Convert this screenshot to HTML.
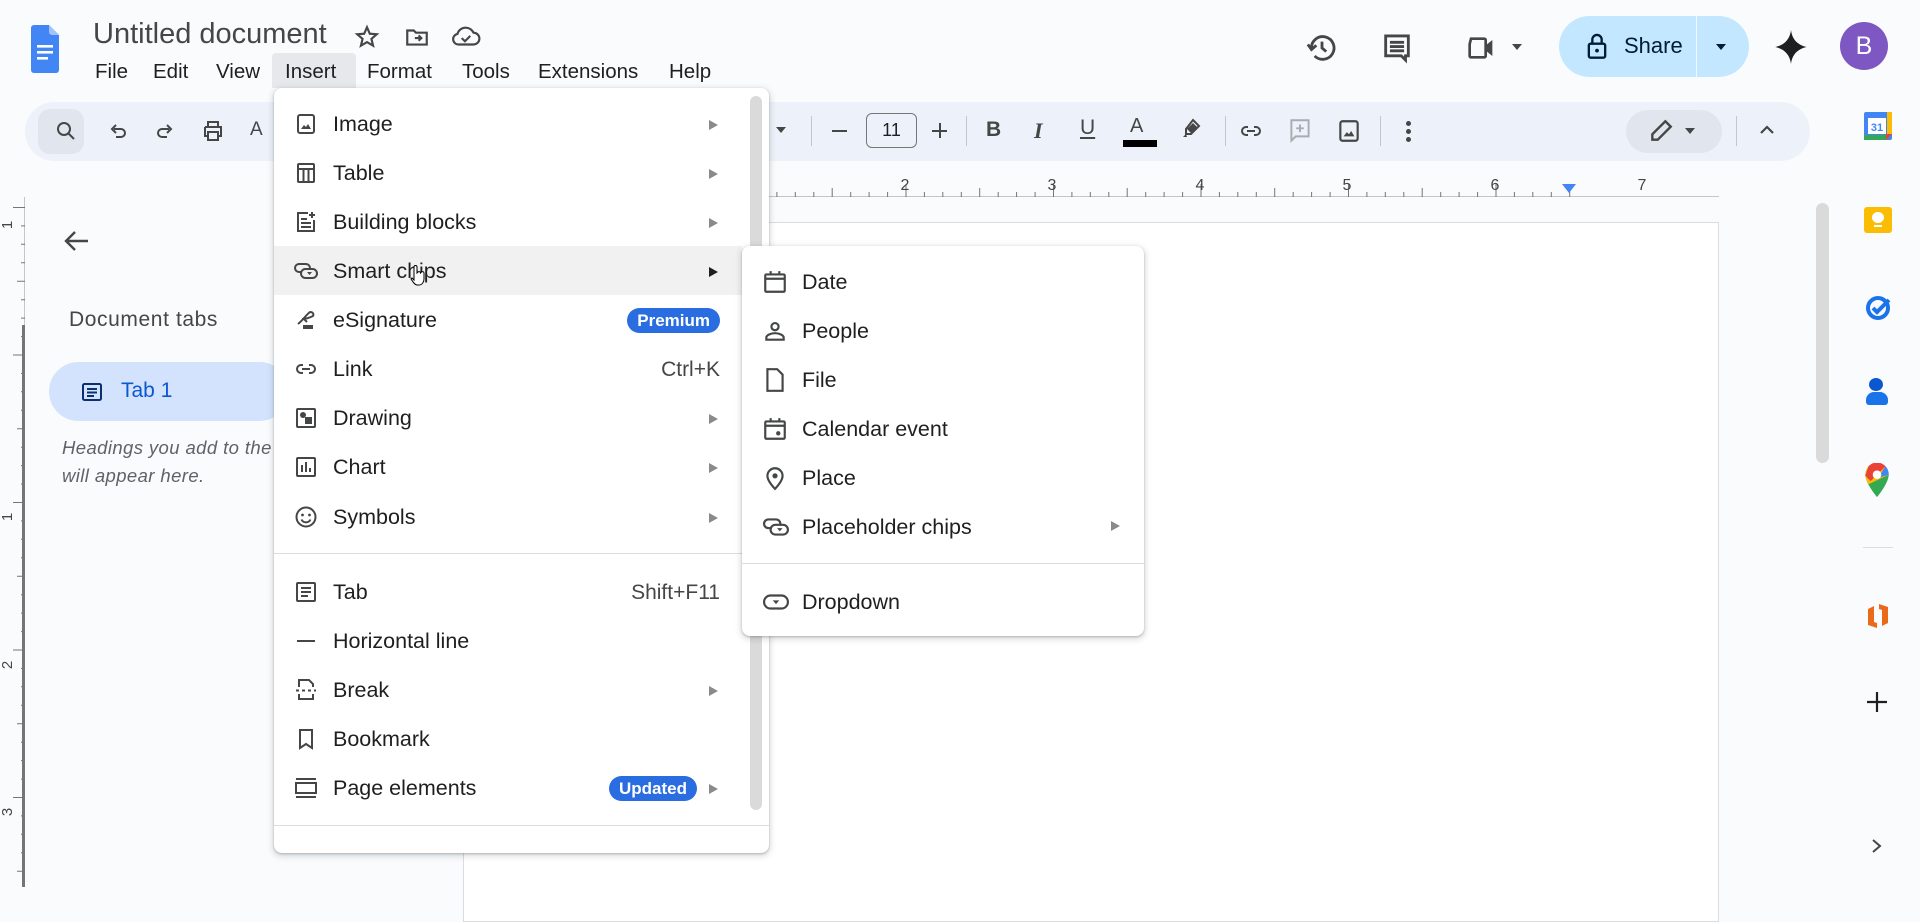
<!DOCTYPE html>
<html><head><meta charset="utf-8"><style>
*{box-sizing:border-box;margin:0;padding:0}
body{width:1920px;height:887px;overflow:hidden;background:#f9fbfd;font-family:"Liberation Sans",Arial,sans-serif;color:#1f1f1f;position:relative}
.a{position:absolute}
svg{display:block}
.ic{fill:none;stroke:#444746;stroke-width:2}
.mi{position:absolute;left:0;right:0;height:49px;display:flex;align-items:center;font-size:21.5px;color:#1f1f1f}
.mi .t{position:absolute;left:59px}
.mi .i{position:absolute;left:20px;top:12px;width:24px;height:24px}
.mi .ar{position:absolute;right:24px;width:0;height:0;border-left:9px solid #8a8a8a;border-top:5px solid transparent;border-bottom:5px solid transparent}
.mi .sc{position:absolute;right:22px;color:#444746;font-size:21px}
.badge{position:absolute;background:#2a6de0;color:#fff;font-weight:bold;font-size:17px;border-radius:13px;height:25px;line-height:25px;padding:0 10px}
.si{position:absolute;left:0;right:0;height:49px;font-size:21.5px}
.si .t{position:absolute;left:60px;top:13px}
.si .i{position:absolute;left:20px;top:12px}
.tb{position:absolute;top:119px}
.sep{position:absolute;top:116px;width:1px;height:30px;background:#c4c7c5}
</style></head><body>

<!-- Header -->
<div class="a" style="left:31px;top:25px"><svg width="28" height="50" viewBox="0 0 28 50"><path d="M3 0h15l10 10v35a3 3 0 0 1-3 3H3a3 3 0 0 1-3-3V3a3 3 0 0 1 3-3z" fill="#4285f4"/><path d="M18 0l10 10h-7a3 3 0 0 1-3-3z" fill="#a1c2fa"/><rect x="6" y="20" width="16" height="2.6" fill="#fff"/><rect x="6" y="26" width="16" height="2.6" fill="#fff"/><rect x="6" y="32" width="11" height="2.6" fill="#fff"/></svg></div>
<div class="a" style="left:93px;top:18px;font-size:29px;color:#444746">Untitled document</div>
<div class="a" style="left:354px;top:24px"><svg width="26" height="26" viewBox="0 0 24 24"><path class="ic" d="M12 3l2.6 6 6.4.5-4.9 4.2 1.5 6.3L12 16.7 6.4 20l1.5-6.3L3 9.5l6.4-.5z" stroke-width="1.8"/></svg></div>
<div class="a" style="left:404px;top:24px"><svg width="26" height="26" viewBox="0 0 24 24"><path class="ic" d="M3 6h6l2 2h10v11H3z"/><path class="ic" d="M10 13h6M13.5 10.5l2.5 2.5-2.5 2.5"/></svg></div>
<div class="a" style="left:451px;top:24px"><svg width="30" height="26" viewBox="0 0 28 24"><path class="ic" d="M7 19a5 5 0 0 1-1-9.9A8 8 0 0 1 21 8a5.5 5.5 0 0 1 0 11z"/><path class="ic" d="M10 13l3 3 5-5"/></svg></div>
<div class="a" style="top:60px;font-size:20.5px;color:#1f1f1f;left:0;width:760px;height:30px">
<span class="a" style="left:95px">File</span><span class="a" style="left:153px">Edit</span><span class="a" style="left:216px">View</span>
<span class="a" style="left:272px;top:-7px;width:84px;height:35px;background:#e6e8eb;border-radius:4px 4px 0 0"></span>
<span class="a" style="left:285px">Insert</span><span class="a" style="left:367px">Format</span><span class="a" style="left:462px">Tools</span><span class="a" style="left:538px">Extensions</span><span class="a" style="left:669px">Help</span></div>

<!-- top right -->
<div class="a" style="left:1305px;top:31px"><svg width="34" height="34" viewBox="0 0 24 24"><path class="ic" d="M4.5 12a8 8 0 1 1 2.3 5.6" stroke-width="2"/><path d="M2 9.5l2.6 3.6 3.4-3" class="ic"/><path class="ic" d="M12 7.5V12l3 2.5"/></svg></div>
<div class="a" style="left:1380px;top:31px"><svg width="34" height="34" viewBox="0 0 24 24"><path class="ic" d="M4 3.5h16v14h-2v3l-3-3H4z" stroke-width="2"/><path class="ic" d="M7 8h10M7 11h10M7 14h10" stroke-width="1.6"/></svg></div>
<div class="a" style="left:1463px;top:32px"><svg width="40" height="32" viewBox="0 0 28 24"><path class="ic" d="M5 5h10a1 1 0 0 1 1 1v12a1 1 0 0 1-1 1H5a1 1 0 0 1-1-1V9z" stroke-width="2.2"/><path d="M16 10l5-4v12l-5-4z" fill="#444746"/></svg></div>
<div class="a" style="left:1512px;top:44px;border-top:6px solid #444746;border-left:5px solid transparent;border-right:5px solid transparent"></div>
<div class="a" style="left:1559px;top:16px;width:190px;height:61px;border-radius:31px;background:#c2e7ff"></div>
<div class="a" style="left:1696px;top:16px;width:1px;height:61px;background:#f2f8ff"></div>
<div class="a" style="left:1586px;top:32px"><svg width="22" height="28" viewBox="0 0 18 24"><rect x="2" y="10" width="14" height="12" rx="1.5" fill="none" style="stroke:#001d35" stroke-width="2"/><path d="M5 10V6.5a4 4 0 0 1 8 0V10" fill="none" stroke="#001d35" stroke-width="2"/><circle cx="9" cy="16" r="1.6" fill="#001d35"/></svg></div>
<div class="a" style="left:1624px;top:33px;font-size:22px;color:#001d35">Share</div>
<div class="a" style="left:1716px;top:44px;border-top:6px solid #001d35;border-left:5.5px solid transparent;border-right:5.5px solid transparent"></div>
<div class="a" style="left:1775px;top:30px"><svg width="32" height="34" viewBox="0 0 24 26"><path d="M12 0C12.8 7 17 11.5 24 13 17 14.5 12.8 19 12 26 11.2 19 7 14.5 0 13 7 11.5 11.2 7 12 0z" fill="#1f1f1f"/></svg></div>
<div class="a" style="left:1840px;top:22px;width:48px;height:48px;border-radius:50%;background:#7e57c2;color:#fff;font-size:25px;text-align:center;line-height:48px">B</div>

<!-- toolbar -->
<div class="a" style="left:25px;top:102px;width:1785px;height:59px;border-radius:30px;background:#edf2fa"></div>
<div class="a" style="left:38px;top:109px;width:46px;height:45px;border-radius:12px;background:#e1e6ee"></div>
<div class="tb" style="left:54px"><svg width="24" height="24" viewBox="0 0 24 24"><circle cx="10" cy="10" r="6" class="ic" stroke-width="2.2"/><path class="ic" d="M14.5 14.5L20 20" stroke-width="2.4"/></svg></div>
<div class="tb" style="left:106px"><svg width="24" height="24" viewBox="0 0 24 24"><path class="ic" d="M8 10h7a4 4 0 0 1 0 8h-5M10 6L6 10l4 4"/></svg></div>
<div class="tb" style="left:153px"><svg width="24" height="24" viewBox="0 0 24 24"><path class="ic" d="M16 10H9a4 4 0 0 0 0 8h5M14 6l4 4-4 4"/></svg></div>
<div class="tb" style="left:201px"><svg width="24" height="24" viewBox="0 0 24 24"><path class="ic" d="M7 8V3h10v5M4 8h16v9h-3M7 17H4V8M7 13h10v8H7z" stroke-width="2"/></svg></div>
<div class="tb" style="left:250px;font-size:19px;color:#444746">A</div>
<div class="tb" style="left:776px;top:127px;border-top:6px solid #444746;border-left:5px solid transparent;border-right:5px solid transparent"></div>
<div class="sep" style="left:811px"></div>
<div class="a" style="left:832px;top:130px;width:15px;height:2px;background:#444746"></div>
<div class="a" style="left:866px;top:113px;width:51px;height:35px;border:1.5px solid #747775;border-radius:6px;text-align:center;line-height:32px;font-size:18px;color:#1f1f1f">11</div>
<div class="a" style="left:932px;top:130px;width:15px;height:2px;background:#444746"></div>
<div class="a" style="left:939px;top:123px;width:2px;height:15px;background:#444746"></div>
<div class="sep" style="left:966px"></div>
<div class="tb" style="left:986px;top:118px;font-size:21px;font-weight:bold;color:#444746">B</div>
<div class="tb" style="left:1034px;top:118px;font-size:22px;font-weight:bold;font-style:italic;font-family:'Liberation Serif',serif;color:#444746">I</div>
<div class="tb" style="left:1080px;top:116px;font-size:21px;color:#444746;text-decoration:underline;text-underline-offset:3px">U</div>
<div class="tb" style="left:1130px;top:115px;font-size:20px;color:#444746">A</div>
<div class="a" style="left:1123px;top:140px;width:34px;height:7px;background:#000"></div>
<div class="tb" style="left:1179px;top:117px"><svg width="24" height="24" viewBox="0 0 24 24"><path d="M14 3l6 6-8 8H7v-5z" fill="none" stroke="#444746" stroke-width="2"/><path d="M7 17l-3 3h4" fill="#444746"/><path d="M8 12l4 4 6-6-4-4z" fill="#444746"/></svg></div>
<div class="sep" style="left:1225px"></div>
<div class="tb" style="left:1238px;top:119px"><svg width="26" height="24" viewBox="0 0 24 24"><path class="ic" d="M9 8H7a4 4 0 0 0 0 8h2M15 8h2a4 4 0 0 1 0 8h-2M8 12h8" stroke-width="2.2"/></svg></div>
<div class="tb" style="left:1287px;top:117px"><svg width="26" height="28" viewBox="0 0 24 26"><path d="M4 3h16v15H8l-4 4z" fill="none" stroke="#a9acaf" stroke-width="1.8"/><path d="M12 7v7M8.5 10.5h7" stroke="#a9acaf" stroke-width="1.8"/></svg></div>
<div class="tb" style="left:1336px;top:118px"><svg width="26" height="26" viewBox="0 0 24 24"><rect x="4" y="3" width="16" height="18" rx="2" class="ic" stroke-width="2.2"/><path d="M7 17l3-4 2 2 2-3 3 5z" fill="#444746"/></svg></div>
<div class="sep" style="left:1380px"></div>
<div class="a" style="left:1406px;top:121px;width:5px;height:5px;border-radius:50%;background:#444746;box-shadow:0 8px 0 #444746,0 16px 0 #444746"></div>
<div class="a" style="left:1626px;top:110px;width:96px;height:43px;border-radius:22px;background:#e1e6ee"></div>
<div class="tb" style="left:1648px;top:118px"><svg width="26" height="26" viewBox="0 0 24 24"><path d="M16 3l5 5L9 20H4v-5z" fill="none" stroke="#444746" stroke-width="2.2"/></svg></div>
<div class="a" style="left:1685px;top:128px;border-top:6px solid #444746;border-left:5px solid transparent;border-right:5px solid transparent"></div>
<div class="sep" style="left:1736px"></div>
<div class="tb" style="left:1758px;top:122px"><svg width="18" height="14" viewBox="0 0 18 14"><path d="M3 11l6-6 6 6" fill="none" stroke="#444746" stroke-width="2.2"/></svg></div>

<!-- horizontal ruler -->
<div class="a" style="left:463px;top:196px;width:1256px;height:1px;background:#c4c7c5"></div>
<div class="a" style="left:463px;top:178px">
<svg width="1260" height="19" viewBox="0 0 1260 19">
<defs><pattern id="rp" x="147.5" width="147.5" height="19" patternUnits="userSpaceOnUse">
<path d="M0.5 6V19M18.9 14V19M37.3 14V19M55.8 14V19M74.2 10V19M92.7 14V19M111.1 14V19M129.6 14V19" stroke="#757575" stroke-width="1"/></pattern></defs>
<rect x="110" y="0" width="1000" height="19" fill="url(#rp)"/>
<text x="442" y="12" font-size="16" fill="#444746" font-family="Liberation Sans" text-anchor="middle">2</text>
<text x="589" y="12" font-size="16" fill="#444746" font-family="Liberation Sans" text-anchor="middle">3</text>
<text x="737" y="12" font-size="16" fill="#444746" font-family="Liberation Sans" text-anchor="middle">4</text>
<text x="884" y="12" font-size="16" fill="#444746" font-family="Liberation Sans" text-anchor="middle">5</text>
<text x="1032" y="12" font-size="16" fill="#444746" font-family="Liberation Sans" text-anchor="middle">6</text>
<text x="1179" y="12" font-size="16" fill="#444746" font-family="Liberation Sans" text-anchor="middle">7</text>
<path d="M1099 6h14l-7 9z" fill="#4285f4"/>
</svg></div>

<!-- vertical ruler -->
<div class="a" style="left:24px;top:197px;width:1px;height:690px;background:#c4c7c5"></div>
<div class="a" style="left:22px;top:325px;width:3px;height:562px;background:#757575"></div>
<div class="a" style="left:0;top:197px"><svg width="25" height="690" viewBox="0 0 25 690">
<defs><pattern id="vp" y="10" width="25" height="147.5" patternUnits="userSpaceOnUse"><path d="M13 0.5H25M21 18.9H25M21 37.3H25M21 55.8H25M17 74.2H25M21 92.7H25M21 111.1H25M21 129.6H25" stroke="#757575"/></pattern></defs>
<rect x="0" y="0" width="25" height="690" fill="url(#vp)"/>
<text transform="translate(12,28) rotate(-90)" font-size="15" fill="#444746" font-family="Liberation Sans" text-anchor="middle">1</text>
<text transform="translate(12,320) rotate(-90)" font-size="15" fill="#444746" font-family="Liberation Sans" text-anchor="middle">1</text>
<text transform="translate(12,468) rotate(-90)" font-size="15" fill="#444746" font-family="Liberation Sans" text-anchor="middle">2</text>
<text transform="translate(12,615) rotate(-90)" font-size="15" fill="#444746" font-family="Liberation Sans" text-anchor="middle">3</text>
</svg></div>

<!-- sidebar -->
<div class="a" style="left:62px;top:229px"><svg width="28" height="24" viewBox="0 0 28 24"><path d="M26 12H4M13 3l-9 9 9 9" fill="none" stroke="#444746" stroke-width="2.4"/></svg></div>
<div class="a" style="left:69px;top:308px;font-size:21px;letter-spacing:0.6px;color:#444746">Document tabs</div>
<div class="a" style="left:49px;top:362px;width:240px;height:59px;border-radius:30px;background:#d3e3fd"></div>
<div class="a" style="left:80px;top:380px"><svg width="24" height="24" viewBox="0 0 24 24"><rect x="3" y="4" width="18" height="16" rx="1.5" fill="none" stroke="#0b306e" stroke-width="2"/><path d="M7 9h10M7 12.5h10M7 16h7" stroke="#0b306e" stroke-width="2"/></svg></div>
<div class="a" style="left:121px;top:379px;font-size:21px;color:#0b57d0">Tab 1</div>
<div class="a" style="left:62px;top:434px;font-size:18.5px;font-style:italic;letter-spacing:0.4px;color:#5f6368;line-height:28px;white-space:nowrap">Headings you add to the<br>will appear here.</div>

<!-- page -->
<div class="a" style="left:463px;top:222px;width:1256px;height:700px;background:#fff;border:1px solid #dadce0"></div>

<!-- right scrollbar & side panel -->
<div class="a" style="left:1816px;top:203px;width:13px;height:260px;border-radius:7px;background:#dadada"></div>
<div class="a" style="left:1864px;top:112px"><svg width="28" height="28" viewBox="0 0 28 28"><rect x="0" y="0" width="28" height="28" rx="2" fill="#4285f4"/><rect x="0" y="23" width="22" height="5" fill="#34a853"/><rect x="23" y="0" width="5" height="22" fill="#fbbc04"/><path d="M22 22h6l-6 6z" fill="#ea4335"/><rect x="4" y="6" width="18" height="16" fill="#fff"/><text x="13" y="19" font-size="11" font-family="Liberation Sans" text-anchor="middle" fill="#4285f4" font-weight="bold">31</text></svg></div>
<div class="a" style="left:1864px;top:207px;width:28px;height:26px;border-radius:3px;background:#fbbc04"></div>
<div class="a" style="left:1872px;top:212px;width:12px;height:11px;border-radius:50%;background:#fff"></div>
<div class="a" style="left:1874px;top:225px;width:8px;height:2px;background:#fff"></div>
<div class="a" style="left:1865px;top:293px"><svg width="28" height="28" viewBox="0 0 28 28"><circle cx="13" cy="15" r="10" fill="none" stroke="#1a73e8" stroke-width="4"/><path d="M8 15l4 4 12-12" fill="none" stroke="#1a73e8" stroke-width="4"/></svg></div>
<div class="a" style="left:1869px;top:378px;width:14px;height:13px;border-radius:50%;background:#0b57d0"></div>
<div class="a" style="left:1866px;top:392px;width:22px;height:13px;border-radius:8px 8px 3px 3px;background:#1a73e8"></div>
<div class="a" style="left:1864px;top:463px"><svg width="26" height="34" viewBox="0 0 24 32"><path d="M12 0a11 11 0 0 1 11 11c0 8-11 21-11 21S1 19 1 11A11 11 0 0 1 12 0z" fill="#34a853"/><path d="M12 0a11 11 0 0 1 11 11L4 20C2 16 1 13 1 11A11 11 0 0 1 12 0z" fill="#fbbc04"/><path d="M4 3A11 11 0 0 1 20 3L6 17 1 12z" fill="#ea4335"/><path d="M20 3a11 11 0 0 1 3 8l-10 3z" fill="#4285f4"/><circle cx="12" cy="11" r="4" fill="#fff"/></svg></div>
<div class="a" style="left:1863px;top:547px;width:30px;height:1px;background:#dadce0"></div>
<div class="a" style="left:1866px;top:603px"><svg width="24" height="26" viewBox="0 0 24 26"><path d="M13 1l9 3v16l-6 3V7l-3-1zM11 25l-9-3V6l6-3v16l3 1z" fill="#eb6a1a"/></svg></div>
<div class="a" style="left:1866px;top:691px"><svg width="22" height="22" viewBox="0 0 22 22"><path d="M11 1v20M1 11h20" stroke="#1f1f1f" stroke-width="2.2"/></svg></div>
<div class="a" style="left:1871px;top:838px"><svg width="12" height="16" viewBox="0 0 12 16"><path d="M2 2l7 6-7 6" fill="none" stroke="#444746" stroke-width="2"/></svg></div>

<!-- Insert menu -->
<div class="a" style="left:274px;top:88px;width:495px;height:765px;background:#fff;border-radius:8px;box-shadow:0 2px 6px 2px rgba(60,64,67,.15),0 1px 2px rgba(60,64,67,.3);overflow:hidden">
<div class="a" style="left:476px;top:8px;width:12px;height:714px;border-radius:6px;background:#dadada"></div>
<div class="a" style="left:0;right:27px;top:158px;height:49px;background:#f1f1f1"></div>
<div class="a" style="left:0;right:0;top:2px;bottom:0">
<div class="mi" style="top:10px;right:27px"><svg class="i" viewBox="0 0 24 24"><rect x="4" y="3" width="16" height="18" rx="2" class="ic"/><path d="M7 17l3-4 2 2 2-3 3 5z" fill="#444746"/></svg><span class="t">Image</span><span class="ar"></span></div>
<div class="mi" style="top:59px;right:27px"><svg class="i" viewBox="0 0 24 24"><rect x="4" y="3" width="16" height="18" rx="1" class="ic"/><path class="ic" d="M4 8h16M9.5 8v13M14.5 8v13"/></svg><span class="t">Table</span><span class="ar"></span></div>
<div class="mi" style="top:108px;right:27px"><svg class="i" viewBox="0 0 24 24"><path class="ic" d="M14 3H4v18h16V10"/><path class="ic" d="M7 9h6M7 13h10M7 17h10M18 2v6M15 5h6"/></svg><span class="t">Building blocks</span><span class="ar"></span></div>
<div class="mi" style="top:157px;right:27px"><svg class="i" viewBox="0 0 24 24" style="width:26px;left:19px"><rect x="1" y="5" width="15" height="8" rx="4" class="ic"/><rect x="7" y="10" width="16" height="9" rx="4.5" class="ic" style="fill:#f1f1f1"/><path d="M13 13h5l-2.5 3z" fill="#444746"/></svg><span class="t">Smart chips</span><span class="ar" style="border-left-color:#1f1f1f"></span></div>
<div class="mi" style="top:206px;right:27px"><svg class="i" viewBox="0 0 24 24"><path class="ic" d="M4 16c5-4 8-9 12-12 3 0 4 2 3 4-4 2-8 3-11 3M10 11l3 3"/><rect x="9" y="17" width="10" height="4" fill="#444746"/></svg><span class="t">eSignature</span><span class="badge" style="right:22px;top:12px">Premium</span></div>
<div class="mi" style="top:255px;right:27px"><svg class="i" viewBox="0 0 24 24"><path class="ic" d="M9 8H7a4 4 0 0 0 0 8h2M15 8h2a4 4 0 0 1 0 8h-2M8 12h8"/></svg><span class="t">Link</span><span class="sc">Ctrl+K</span></div>
<div class="mi" style="top:304px;right:27px"><svg class="i" viewBox="0 0 24 24"><rect x="3" y="3" width="18" height="18" rx="1" class="ic"/><circle cx="9" cy="9" r="3" fill="#444746"/><rect x="11" y="11" width="7" height="7" fill="#444746"/></svg><span class="t">Drawing</span><span class="ar"></span></div>
<div class="mi" style="top:353px;right:27px"><svg class="i" viewBox="0 0 24 24"><rect x="3" y="3" width="18" height="18" rx="1" class="ic"/><path d="M8 10v7M12 7v10M16 13v4" stroke="#444746" stroke-width="2"/></svg><span class="t">Chart</span><span class="ar"></span></div>
<div class="mi" style="top:403px;right:27px"><svg class="i" viewBox="0 0 24 24"><circle cx="12" cy="12" r="9.5" class="ic"/><circle cx="8.5" cy="10" r="1.4" fill="#444746"/><circle cx="15.5" cy="10" r="1.4" fill="#444746"/><path class="ic" d="M7.5 14.5a5 5 0 0 0 9 0"/></svg><span class="t">Symbols</span><span class="ar"></span></div>
<div class="a" style="left:0;right:27px;top:463px;height:1px;background:#dadce0"></div>
<div class="mi" style="top:478px;right:27px"><svg class="i" viewBox="0 0 24 24"><rect x="3" y="3" width="18" height="18" rx="1" class="ic"/><path class="ic" d="M7 8h10M7 12h10M7 16h7"/></svg><span class="t">Tab</span><span class="sc">Shift+F11</span></div>
<div class="mi" style="top:527px;right:27px"><svg class="i" viewBox="0 0 24 24"><path d="M3 12h18" stroke="#444746" stroke-width="2"/></svg><span class="t">Horizontal line</span></div>
<div class="mi" style="top:576px;right:27px"><svg class="i" viewBox="0 0 24 24"><path class="ic" d="M5 9V2h10l4 4v3M5 16v5h14v-5M2 12.5h3M8 12.5h3M14 12.5h3M20 12.5h2"/></svg><span class="t">Break</span><span class="ar"></span></div>
<div class="mi" style="top:625px;right:27px"><svg class="i" viewBox="0 0 24 24"><path class="ic" d="M6 3h12v18l-6-4-6 4z"/></svg><span class="t">Bookmark</span></div>
<div class="mi" style="top:674px;right:27px"><svg class="i" viewBox="0 0 24 24"><path class="ic" d="M2 3h20M2 21h20"/><rect x="2" y="7" width="20" height="10" class="ic"/></svg><span class="t">Page elements</span><span class="badge" style="right:45px;top:12px">Updated</span><span class="ar"></span></div>
<div class="a" style="left:0;right:0;top:735px;height:1px;background:#dadce0"></div>
</div></div>

<!-- Smart chips submenu -->
<div class="a" style="left:742px;top:246px;width:402px;height:390px;background:#fff;border-radius:8px;box-shadow:0 2px 6px 2px rgba(60,64,67,.15),0 1px 2px rgba(60,64,67,.3)">
<div class="si" style="top:11px"><svg class="i" width="26" height="26" viewBox="0 0 24 24"><rect x="3" y="5" width="18" height="16" rx="1" class="ic"/><path class="ic" d="M3 9h18M8 2v4M16 2v4"/></svg><span class="t">Date</span></div>
<div class="si" style="top:60px"><svg class="i" width="26" height="26" viewBox="0 0 24 24"><circle cx="12" cy="8" r="3.3" class="ic"/><path class="ic" d="M4 20v-2c0-2 4-4 8-4s8 2 8 4v2z"/></svg><span class="t">People</span></div>
<div class="si" style="top:109px"><svg class="i" width="26" height="26" viewBox="0 0 24 24"><path class="ic" d="M5 2h9l5 5v15H5z"/></svg><span class="t">File</span></div>
<div class="si" style="top:158px"><svg class="i" width="26" height="26" viewBox="0 0 24 24"><rect x="3" y="5" width="18" height="16" rx="1" class="ic"/><path class="ic" d="M3 9h18M8 2v4M16 2v4"/><circle cx="15" cy="16" r="2" fill="#444746"/></svg><span class="t">Calendar event</span></div>
<div class="si" style="top:207px"><svg class="i" width="26" height="26" viewBox="0 0 24 24"><path class="ic" d="M12 22s-7-7-7-12a7 7 0 0 1 14 0c0 5-7 12-7 12z"/><circle cx="12" cy="10" r="2.4" fill="#444746"/></svg><span class="t">Place</span></div>
<div class="si" style="top:256px"><svg class="i" width="28" height="26" viewBox="0 0 24 24"><rect x="1" y="5" width="15" height="8" rx="4" class="ic"/><rect x="7" y="10" width="16" height="9" rx="4.5" class="ic" style="fill:#fff"/><path d="M13 13h5l-2.5 3z" fill="#444746"/></svg><span class="t">Placeholder chips</span><span class="a" style="right:24px;top:19px;border-left:9px solid #8a8a8a;border-top:5px solid transparent;border-bottom:5px solid transparent"></span></div>
<div class="a" style="left:0;right:0;top:317px;height:1px;background:#dadce0"></div>
<div class="si" style="top:331px"><svg class="i" width="28" height="26" viewBox="0 0 24 24"><rect x="1" y="6" width="22" height="12" rx="6" class="ic"/><path d="M9 10.5h6l-3 3.5z" fill="#444746"/></svg><span class="t">Dropdown</span></div>
</div>

<!-- cursor -->
<div class="a" style="left:409px;top:264px"><svg width="18" height="22" viewBox="0 0 18 22"><path d="M5 10V3a1.5 1.5 0 0 1 3 0v6l1-1a1.5 1.5 0 0 1 2.5 1l1-1a1.5 1.5 0 0 1 2.5 1v6c0 3-2 6-5 6H8c-2 0-4-3-6-6l1-1 2 2z" fill="#fff" stroke="#000" stroke-width="1"/></svg></div>
</body></html>
